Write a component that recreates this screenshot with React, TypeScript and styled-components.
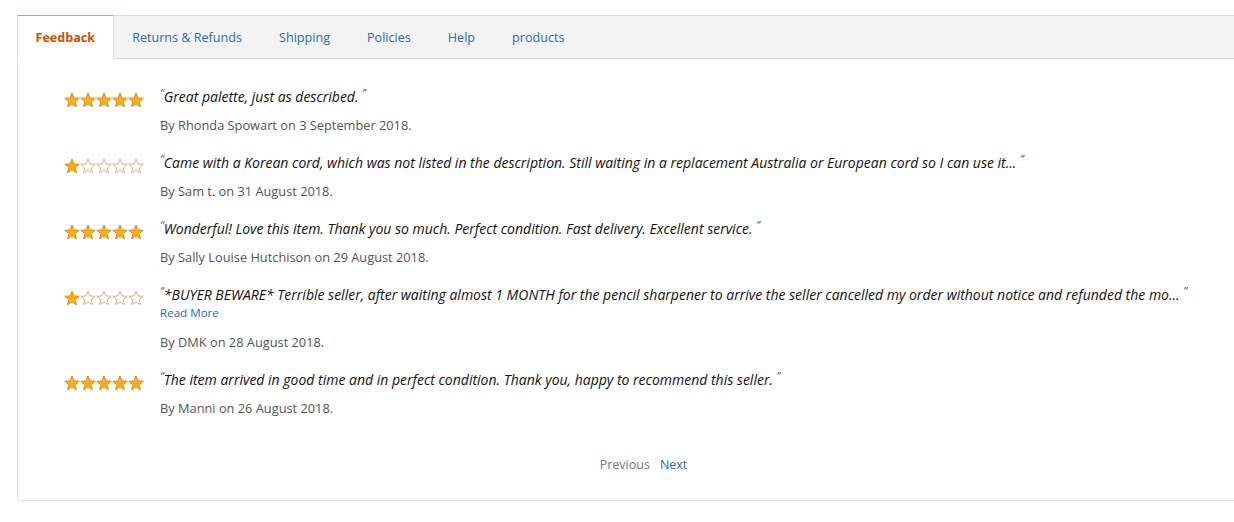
import React from 'react';
import styled, { createGlobalStyle } from 'styled-components';

type Review = {
  rating: number;
  text: string;
  author: string;
  date: string;
  more?: boolean;
};

const reviews: Review[] = [
  { rating: 5, text: 'Great palette, just as described.', author: 'Rhonda Spowart', date: '3 September 2018' },
  {
    rating: 1,
    text: 'Came with a Korean cord, which was not listed in the description. Still waiting in a replacement Australia or European cord so I can use it...',
    author: 'Sam t.',
    date: '31 August 2018',
  },
  {
    rating: 5,
    text: 'Wonderful! Love this item. Thank you so much. Perfect condition. Fast delivery. Excellent service.',
    author: 'Sally Louise Hutchison',
    date: '29 August 2018',
  },
  {
    rating: 1,
    text: '*BUYER BEWARE* Terrible seller, after waiting almost 1 MONTH for the pencil sharpener to arrive the seller cancelled my order without notice and refunded the mo...',
    author: 'DMK',
    date: '28 August 2018',
    more: true,
  },
  {
    rating: 5,
    text: 'The item arrived in good time and in perfect condition. Thank you, happy to recommend this seller.',
    author: 'Manni',
    date: '26 August 2018',
  },
];

const tabs = ['Feedback', 'Returns & Refunds', 'Shipping', 'Policies', 'Help', 'products'];

const starPoints = (() => {
  const pts: string[] = [];
  for (let i = 0; i < 10; i++) {
    const r = i % 2 === 0 ? 7.6 : 3.3;
    const a = (Math.PI / 5) * i - Math.PI / 2;
    pts.push(`${(8 + r * Math.cos(a)).toFixed(2)},${(8.6 + r * Math.sin(a)).toFixed(2)}`);
  }
  return pts.join(' ');
})();

const Star: React.FC<{ filled: boolean }> = ({ filled }) => (
  <svg width="16" height="16" viewBox="0 0 16 16">
    <polygon
      points={starPoints}
      fill={filled ? '#ffae1a' : '#ffffff'}
      stroke={filled ? '#d5880e' : '#c9ad7a'}
      strokeWidth="0.9"
      strokeLinejoin="round"
    />
  </svg>
);

const App: React.FC = () => {
  return (
    <>
      <GlobalStyle />
      <Panel>
        <TabBar>
          {tabs.map((t, i) => (
            <Tab key={t} active={i === 0}>
              {t}
            </Tab>
          ))}
        </TabBar>
        <List>
          {reviews.map((r) => (
            <Row key={r.author}>
              <Stars>
                {[0, 1, 2, 3, 4].map((i) => (
                  <Star key={i} filled={i < r.rating} />
                ))}
              </Stars>
              <Body>
                <Quote>
                  <Mark>“</Mark>
                  {r.text} <Mark>”</Mark>
                </Quote>
                {r.more && <ReadMore>Read More</ReadMore>}
                <Byline>
                  By {r.author} on {r.date}.
                </Byline>
              </Body>
            </Row>
          ))}
        </List>
        <Pager>
          <PagerOff>Previous</PagerOff>
          <PagerLink>Next</PagerLink>
        </Pager>
      </Panel>
    </>
  );
};

const GlobalStyle = createGlobalStyle`
  html, body {
    margin: 0;
    padding: 0;
    background: #fff;
    overflow: hidden;
  }
  body {
    font-family: "Open Sans", "Liberation Sans", Arial, sans-serif;
    font-size: 13px;
    color: #111;
  }
`;

const Panel = styled.div`
  margin: 15px 0 0 17px;
  width: 1253px;
  height: 486px;
  box-sizing: border-box;
  border: 1px solid #dddddd;
  border-top: none;
  border-radius: 0 0 4px 4px;
  display: flex;
  flex-direction: column;
`;

const TabBar = styled.div`
  display: flex;
  height: 44px;
  box-sizing: border-box;
  background: #f3f3f3;
  border-top: 1px solid #dddddd;
  border-bottom: 1px solid #dddddd;
  margin-left: -1px;
  margin-right: -1px;
`;

const Tab = styled.div<{ active?: boolean }>`
  display: flex;
  align-items: center;
  padding: 0 17.5px;
  margin-top: -1px;
  margin-bottom: -1px;
  font-size: 12.6px;
  font-weight: ${(p) => (p.active ? 700 : 400)};
  color: ${(p) => (p.active ? '#c45500' : '#2f6aa3')};
  background: ${(p) => (p.active ? '#ffffff' : 'transparent')};
  border-top: 1px solid ${(p) => (p.active ? '#e0a040' : 'transparent')};
  border-left: 1px solid ${(p) => (p.active ? '#dddddd' : 'transparent')};
  border-right: 1px solid ${(p) => (p.active ? '#dddddd' : 'transparent')};
  border-bottom: 1px solid ${(p) => (p.active ? '#ffffff' : 'transparent')};
`;

const List = styled.div`
  display: flex;
  flex-direction: column;
  gap: 18px;
  padding: 27.5px 0 0 46px;
`;

const Row = styled.div`
  display: flex;
`;

const Stars = styled.div`
  display: flex;
  width: 96px;
  flex-shrink: 0;
  padding-top: 5px;
  height: 16px;
`;

const Body = styled.div`
  display: flex;
  flex-direction: column;
`;

const Quote = styled.div`
  font-style: italic;
  font-size: 14px;
  line-height: 19px;
  color: #111;
  white-space: nowrap;
`;

const Mark = styled.span`
  font-size: 11px;
  color: #555;
  vertical-align: top;
  line-height: 12px;
`;

const ReadMore = styled.div`
  font-size: 11.6px;
  line-height: 17px;
  margin-bottom: 2px;
  color: #2f6aa3;
`;

const Byline = styled.div`
  font-size: 12.8px;
  line-height: 19px;
  margin-top: 10px;
  color: #555;
`;

const Pager = styled.div`
  display: flex;
  justify-content: center;
  gap: 10px;
  margin-top: 37px;
  font-size: 12.5px;
  line-height: 19px;
`;

const PagerOff = styled.span`
  color: #777;
`;

const PagerLink = styled.span`
  color: #2f6aa3;
`;

export default App;
